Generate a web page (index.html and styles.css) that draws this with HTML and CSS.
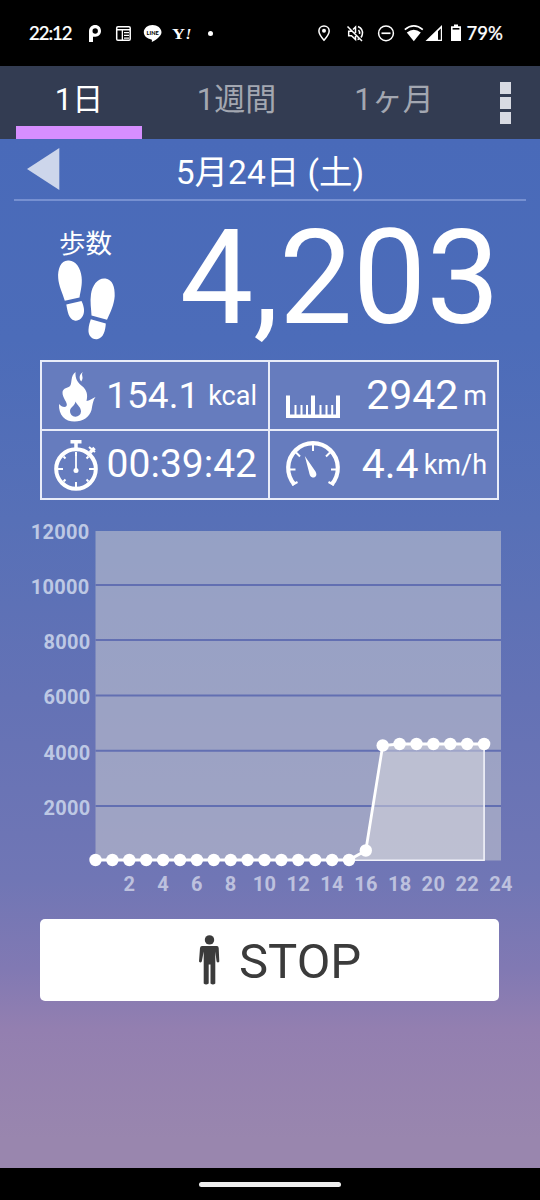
FILE: index.html
```html
<!DOCTYPE html>
<html lang="ja">
<head>
<meta charset="utf-8">
<title>歩数計</title>
<link rel="stylesheet" href="styles.css">
</head>
<body>
<div class="phone">
  <header class="status">
    <span class="clock">22:12</span>
    <svg class="status-left" width="144" height="24" viewBox="80 21 144 24" fill="#fff">
      <path fill-rule="evenodd" d="M89 42V31.500C89 27.500 91.700 25 95.200 25S101 27.600 101 31 98.500 36.700 95.500 36.700H93V42ZM95.200 28.300A2.700 2.700 0 1 0 95.200 33.700 2.700 2.700 0 0 0 95.200 28.300Z"/>
      <rect x="116.700" y="26.700" width="13.500" height="13.500" rx="1.300" fill="none" stroke="#fff" stroke-width="1.500"/>
      <path d="M117 29h13v1.500h-13zM121.700 30h1.300v10h-1.300zM124 32h5v1.300h-5zM124 34.800h5v1.300h-5zM124 37.500h5v1.300h-5z"/>
      <path d="M152.500 25C147.700 25 143.800 28.200 143.800 32.300 143.800 35.900 147 38.800 151.400 39.400 152.300 39.600 151.800 41 151.800 42 154 41 161.500 36.800 161.500 32.300 161.500 28.200 157.400 25 152.500 25Z"/>
      <text class="line-logo" x="152.600" y="34.800" textLength="12" lengthAdjust="spacingAndGlyphs">LINE</text>
      <text class="yahoo" x="172" y="38.500" textLength="13" lengthAdjust="spacingAndGlyphs">Y</text>
      <text class="yahoo yahoo-mark" x="185.500" y="38.500">!</text>
      <circle cx="210.500" cy="33.500" r="2.500"/>
    </svg>
    <svg class="status-right" width="148" height="24" viewBox="316 21 148 24" fill="#fff">
      <path d="M324 26C320.900 26 318.900 28.200 318.900 31 318.900 34.400 324 40.200 324 40.200S329.200 34.400 329.200 31C329.200 28.200 327.100 26 324 26Z" fill="none" stroke="#fff" stroke-width="1.500"/>
      <circle cx="324" cy="30.800" r="2"/>
      <path d="M347.500 26.500 362 41M353 29.500 355.500 27V33M355.500 36V39.500L351.500 35.800H348.700V31.200H351.500M358.500 30Q360 31.500 359.500 34M358 26.500Q363.500 29 362.300 34.500 362 36 361 37.500M357.500 39.500 359 39" fill="none" stroke="#fff" stroke-width="1.500"/>
      <circle cx="386" cy="33.300" r="7.400" fill="none" stroke="#fff" stroke-width="1.500"/>
      <path d="M381.500 32.400h9v1.700h-9z"/>
      <path d="M404.800 29.600Q413.800 22.200 422.800 29.600" fill="none" stroke="#fff" stroke-width="1.700"/>
      <path d="M406.800 32.500Q413.800 26.800 420.800 32.500L413.800 41.300Z"/>
      <path fill-rule="evenodd" d="M442 25V41H425.500ZM440.800 28.500 438 31.200V39.800H440.800Z"/>
      <path d="M454 24.500h4v1.800h3V41h-10V26.300h3z"/>
      <path d="M452.600 28h6.800v1.600h-6.800z" fill="#000"/>
    </svg>
    <span class="battery">79%</span>
  </header>

  <nav class="tabs">
    <div class="tab active">1日</div>
    <div class="tab">1週間</div>
    <div class="tab">1ヶ月</div>
    <div class="more"><i></i><i></i><i></i></div>
  </nav>

  <main class="content">
    <div class="date-row">
      <svg class="prev" width="34" height="44" viewBox="0 0 34 44"><path d="M0 22 32.300 1V43Z" fill="#cdd6eb"/></svg>
      <div class="date">5月24日 (土)</div>
    </div>

    <section class="steps">
      <div class="steps-label">
        <span>歩数</span>
        <svg width="60" height="82" viewBox="57 259 60 82" fill="#fff">
          <path d="M69 260.500C61 259.500 57.500 269 58.200 278 58.700 286 62.500 293 64.800 300.800L79.500 297.500C80.500 291 82.500 285 81.600 277 80.600 268 76 261 69 260.500ZM66.300 304.500 81.500 301C83 304 84.700 309 83.800 313 83 318 78.500 321.500 74.500 320.500 68.500 319 67.500 311 66.300 304.500Z"/>
          <path d="M105.500 278.500C98 277.500 92.300 285 91 294 89.800 302 91.300 309 91.500 315.500L107 319.800C110 313 114.200 305 114.700 296 115 287 112.500 279.500 105.500 278.500ZM90.800 319.300 105.800 323.500C105.500 330 103.500 338.500 97 339.200 91.500 339.700 88 335 88.500 329.500 88.700 325.500 90 322 90.800 319.300Z"/>
        </svg>
      </div>
      <div class="steps-value">4,203</div>
    </section>

    <section class="stats">
      <div class="cell">
        <svg class="icon" width="54" height="60" viewBox="49 365 54 60">
          <path fill="#fff" d="M75.500 371C75 378 78 382 82 385C87 389 88 394 86.500 400C89.500 400 92 397.500 95.500 396C93 399 92.500 404 91.500 409C89.500 416 83 420.500 74.500 420.500C65 420.500 58.500 414.500 59 403C61.500 406 65 407 66.500 405C68.500 402 62 397 62.500 391C63 387 68 387 70 385C72.500 382 70 375 75.500 371ZM82.800 371C80.500 374.500 84.500 376 81.200 380.500C79.300 378 78.500 374 82.800 371Z"/>
          <path fill="#667cbe" d="M75.500 400.500C77 404 81 406 81 410.500A5.500 5.500 0 0 1 70 410C70 406 75 405 75.500 400.500Z"/>
        </svg>
        <span class="num kcal-num">154.1</span><span class="unit kcal">kcal</span>
      </div>
      <div class="cell">
        <svg class="icon" width="58" height="60" viewBox="284 365 58 60" fill="#fff">
          <path d="M286 394.500h4v19h21v-19h4v19h21v-19h4v22.500h-54zM294.500 404h2v10h-2zM300.500 404h2v10h-2zM306 404h2v10h-2zM319.500 404h2v10h-2zM325.500 404h2v10h-2zM331.200 404h2v10h-2z"/>
        </svg>
        <span class="num">2942</span><span class="unit">m</span>
      </div>
      <div class="cell">
        <svg class="icon" width="54" height="60" viewBox="49 435 54 60" fill="none" stroke="#fff">
          <circle cx="76" cy="469" r="19.800" stroke-width="4"/>
          <path stroke-width="3.500" d="M76 449v-8M70.500 441.700h11M90 452.500l4.500-4.500"/>
          <path stroke-width="2" d="M89 447l6 5M76 452v4M76 482v5M58 469h5M89 469h5M63.500 456.500l2 2M88.500 456.500l-2 2M63.500 481.500l2-2M88.500 481.500l-2-2"/>
          <path stroke-width="1.800" d="M76 454v16"/>
          <circle cx="76" cy="470.500" r="2.500" fill="#fff" stroke="none"/>
        </svg>
        <span class="num time-num">00:39:42</span>
      </div>
      <div class="cell">
        <svg class="icon" width="58" height="60" viewBox="284 435 58 60" fill="none" stroke="#fff">
          <path stroke-width="4.200" d="M294.500 484.500A24.800 24.800 0 1 1 331.500 484.500"/>
          <path stroke-width="2" d="M313 445v6M289 469.500h6.500M331 469.500h6.500M296 452.500l4 4M330 452.500l-4 4M292 485l5.500-3M334 485l-5.500-3"/>
          <path fill="#fff" stroke="none" d="M304.800 456 315.500 471.500C318 476 314.500 478 312.500 477.500 310 477 309.500 474.500 309 472Z"/>
        </svg>
        <span class="num">4.4</span><span class="unit">km/h</span>
      </div>
    </section>

    <svg class="chart" width="540" height="390" viewBox="0 510 540 390">
      <rect x="95.500" y="531" width="405.500" height="329.500" fill="#c6c8d1" fill-opacity=".56"/>
      <path d="M95.500 585h405.500M95.500 640h405.500M95.500 695.500h405.500M95.500 750.700h405.500M95.500 806h405.500" stroke="#626fb2" stroke-width="2"/>
      <path d="M348.900 860.500 365.800 850.500 382.700 745.500 399.600 744H484.100V860.500Z" fill="#dcdce0" fill-opacity=".5"/>
      <path d="M348.900 860.200H484.100V744" fill="none" stroke="#f1f2f9" stroke-width="1.600"/>
      <path d="M95.500 860H348.900L365.800 850.500 382.700 745.500 399.600 744H484.100" fill="none" stroke="#fff" stroke-width="2.800"/>
      <g fill="#fff">
        <circle cx="95.500" cy="860" r="6.200"/><circle cx="112.400" cy="860" r="6.200"/><circle cx="129.300" cy="860" r="6.200"/><circle cx="146.200" cy="860" r="6.200"/><circle cx="163.100" cy="860" r="6.200"/><circle cx="180" cy="860" r="6.200"/><circle cx="196.900" cy="860" r="6.200"/><circle cx="213.800" cy="860" r="6.200"/><circle cx="230.700" cy="860" r="6.200"/><circle cx="247.600" cy="860" r="6.200"/><circle cx="264.500" cy="860" r="6.200"/><circle cx="281.400" cy="860" r="6.200"/><circle cx="298.300" cy="860" r="6.200"/><circle cx="315.200" cy="860" r="6.200"/><circle cx="332.100" cy="860" r="6.200"/><circle cx="349" cy="860" r="6.200"/><circle cx="365.800" cy="850.500" r="6.200"/><circle cx="382.700" cy="745.500" r="6.200"/><circle cx="399.600" cy="744" r="6.200"/><circle cx="416.500" cy="744" r="6.200"/><circle cx="433.400" cy="744" r="6.200"/><circle cx="450.300" cy="744" r="6.200"/><circle cx="467.200" cy="744" r="6.200"/><circle cx="484.100" cy="744" r="6.200"/>
      </g>
      <g class="axis y-axis">
        <text x="89.500" y="538.500">12000</text><text x="89.500" y="593.500">10000</text><text x="90.500" y="649">8000</text><text x="90.500" y="704">6000</text><text x="90.500" y="759.500">4000</text><text x="90.500" y="814.500">2000</text>
      </g>
      <g class="axis x-axis">
        <text x="129.300" y="890.500">2</text><text x="163.100" y="890.500">4</text><text x="196.900" y="890.500">6</text><text x="230.700" y="890.500">8</text><text x="264.500" y="890.500">10</text><text x="298.300" y="890.500">12</text><text x="332.100" y="890.500">14</text><text x="366" y="890.500">16</text><text x="399.700" y="890.500">18</text><text x="433.400" y="890.500">20</text><text x="467.200" y="890.500">22</text><text x="501" y="890.500">24</text>
      </g>
    </svg>

    <button class="stop">
      <svg width="22" height="50" viewBox="198 935 22 50" fill="#3b3b3b">
        <circle cx="209.500" cy="939.900" r="4.700"/>
        <path d="M202 946H217Q218.500 946 218.700 948L219.300 961.500Q218 963.500 216.600 961.500L215.300 951.500V983.500Q213 985.500 210.500 983.500V964.500H208.700V983.500Q206 985.500 203.700 983.500V951.500L201.800 961.500Q200.500 963.500 199 961.500L200 948Q200.300 946 202 946Z"/>
      </svg>
      <span>STOP</span>
    </button>
  </main>
  <footer class="gesture"><div class="pill"></div></footer>
</div>
</body>
</html>
```
FILE: styles.css
```css
* { box-sizing: border-box; }
body { margin: 0; }
.phone {
  width: 540px;
  height: 1200px;
  display: flex;
  flex-direction: column;
  overflow: hidden;
  background: #000;
  color: #fff;
  font-family: Roboto, "Noto Sans CJK JP", sans-serif;
}
.status {
  height: 66px;
  display: flex;
  align-items: center;
  padding-left: 29px;
  font-family: Lato, sans-serif;
  font-size: 18.500px;
  font-weight: 500;
}
.clock { width: 51px; letter-spacing: -1px; -webkit-text-stroke: .2px #fff; }
.status-right { margin-left: 92px; }
.battery { margin-left: 2.500px; -webkit-text-stroke: .2px #fff; }
.line-logo { font: 900 6px Lato, sans-serif; fill: #000; text-anchor: middle; }
.yahoo { font: bold 15px "Liberation Serif", serif; }
.yahoo-mark { font-style: italic; }

.tabs {
  height: 73px;
  display: flex;
  gap: 31.500px;
  padding-left: 16px;
  background: #333c52;
}
.tab {
  width: 126px;
  height: 73px;
  padding: 8px 0 13px;
  display: flex;
  align-items: center;
  justify-content: center;
  font-size: 31px;
  line-height: 52px;
  color: #a3a7b1;
  white-space: nowrap;
}
.active { color: #fff; border-bottom: 13px solid #d68eff; padding-bottom: 0; }
.more {
  display: flex;
  flex-direction: column;
  gap: 3.500px;
  padding-top: 16px;
  margin-left: 11px;
}
.more i { width: 11.500px; height: 11.500px; background: #d8dae2; }

.content {
  height: 1029px;
  display: flex;
  flex-direction: column;
  background: linear-gradient(180deg, #496ab9 0, #4c6cb9 200px, #5770b7 380px, #6472b5 560px, #7076b5 740px, #8179b3 830px, #937fb0 890px, #9986ae 1000px, #9986ae 100%);
}
.date-row {
  height: 62px;
  margin: 0 14px;
  border-bottom: 2px solid #7690d1;
  display: flex;
  align-items: flex-start;
  padding: 8px 0 0 12.500px;
}
.date {
  width: 419px;
  padding-top: 2px;
  font-size: 33.500px;
  line-height: 48px;
  text-align: center;
  white-space: nowrap;
}
.steps {
  height: 159px;
  display: flex;
  justify-content: space-between;
  padding: 0 40px 0 57px;
}
.steps-label { width: 60px; padding-top: 27px; font-size: 26.500px; line-height: 31px; }
.steps-label span { display: block; padding-left: 2px; white-space: nowrap; }
.steps-label svg { display: block; }
.steps-value { font-size: 131px; line-height: 154px; }

.stats {
  width: 459px;
  height: 140px;
  margin-left: 40px;
  display: grid;
  grid-template-columns: 226px 227px;
  grid-template-rows: 67px 67px;
  gap: 2px;
  padding: 2px;
  background: #e9edf9;
}
.cell {
  background: #667cbe;
  display: flex;
  align-items: center;
  padding: 0 11px 0 7px;
  white-space: nowrap;
}
.cell:nth-child(even) { padding: 0 10px 0 14px; }
.cell .icon { flex: none; }
.num { font-size: 41px; line-height: 67px; margin-left: auto; }
.kcal-num { font-size: 37px; }
.time-num { font-size: 39px; }
.unit { font-size: 27px; line-height: 67px; padding-top: 1px; margin-left: 5px; }
.kcal { margin-left: 9px; }

.chart { display: block; margin-top: 10px; flex: none; }
.axis { font: bold 20px Roboto, sans-serif; fill: #bdc8e4; letter-spacing: .3px; }
.y-axis { text-anchor: end; }
.x-axis { text-anchor: middle; fill: #bdc1de; }

.stop {
  width: 459px;
  height: 82px;
  margin: 19px 0 0 40px;
  border: 0;
  border-radius: 5px;
  padding: 0 0 0 158px;
  display: flex;
  align-items: center;
  gap: 19px;
  background: #fff;
  color: #3b3b3b;
  font: 49px/82px Roboto, sans-serif;
}
.stop span { padding-top: 3px; }
.gesture { height: 32px; display: flex; justify-content: center; padding-top: 14px; }
.pill { width: 142px; height: 5px; border-radius: 3px; background: #eee; }
```
